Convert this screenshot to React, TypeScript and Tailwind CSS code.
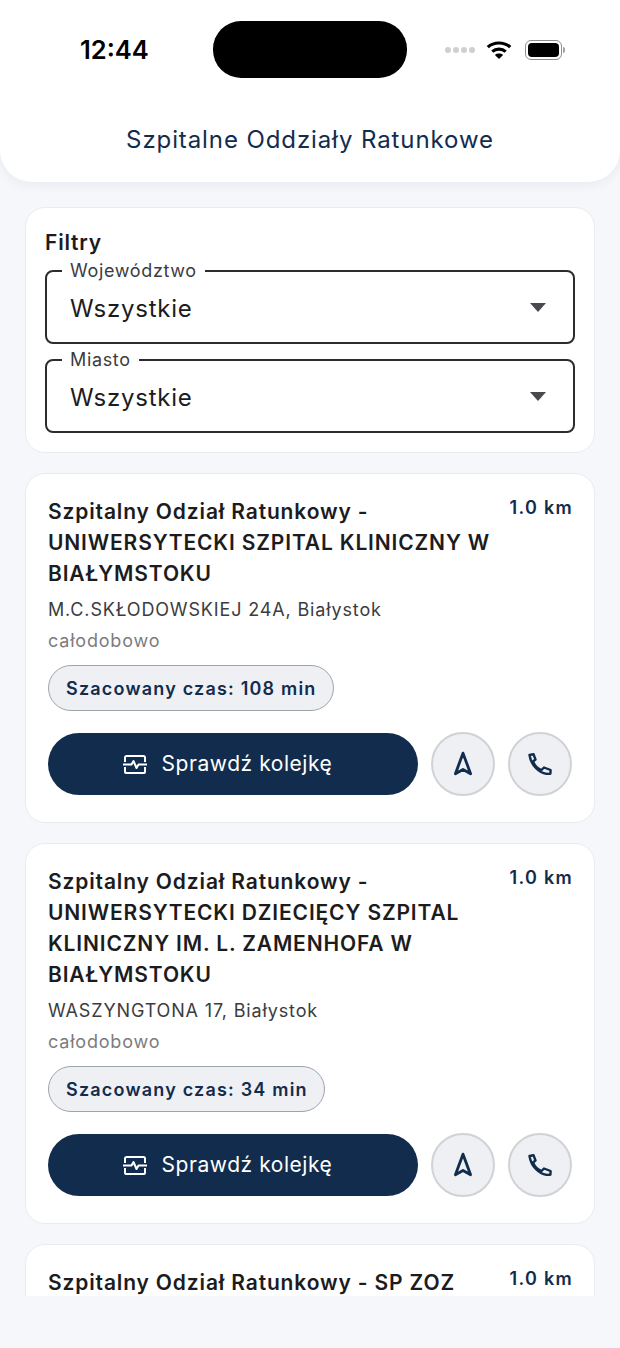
import { Navigation2 } from "lucide-react"

const hospitals = [
  {
    name: "Szpitalny Odział Ratunkowy - UNIWERSYTECKI SZPITAL KLINICZNY W BIAŁYMSTOKU",
    address: "M.C.SKŁODOWSKIEJ 24A, Białystok",
    time: 108,
  },
  {
    name: "Szpitalny Odział Ratunkowy - UNIWERSYTECKI DZIECIĘCY SZPITAL KLINICZNY IM. L. ZAMENHOFA W BIAŁYMSTOKU",
    address: "WASZYNGTONA 17, Białystok",
    time: 34,
  },
]

const WifiIcon = () => (
  <svg width="26" height="20" viewBox="0 0 26 20" fill="none">
    <path d="M1.8 7.2C7.8 1.6 18.2 1.6 24.2 7.2" stroke="black" strokeWidth="3.2" />
    <path d="M6.3 11.6C10 8.2 16 8.2 19.7 11.6" stroke="black" strokeWidth="3.2" />
    <path d="M13 19L8.9 14.9C11.2 13 14.8 13 17.1 14.9L13 19Z" fill="black" />
  </svg>
)

const BatteryIcon = () => (
  <div className="flex items-center gap-[1px]">
    <div className="h-[20px] w-[37px] rounded-[6px] border border-[#8e8e8e] p-[2px]">
      <div className="h-full w-full rounded-[4px] bg-black" />
    </div>
    <div className="h-[6px] w-[2px] rounded-r-full bg-[#a0a0a0]" />
  </div>
)

const PulseIcon = () => (
  <svg width="24" height="19" viewBox="0 0 24 19" fill="none" stroke="white" strokeWidth="2" strokeLinejoin="round">
    <path d="M2 7V2.6A1.6 1.6 0 0 1 3.6 1h16.8A1.6 1.6 0 0 1 22 2.6V7" />
    <path d="M2 12v4.4A1.6 1.6 0 0 0 3.6 18h16.8a1.6 1.6 0 0 0 1.6-1.6V12" />
    <path d="M0 9.5h8.5l2-3.5 3 7 2-3.5H24" />
  </svg>
)

const PhoneIcon = () => (
  <svg width="24" height="22" viewBox="0 0 24 22" fill="none" stroke="currentColor" strokeWidth="2.4" strokeLinejoin="round">
    <path d="M1.5 2 5.5 1.2 7.5 6.5 5 8.5C6.5 12.5 9.5 15.5 13.5 17L16 14.5 22.6 17 22.4 20.6 21 21C11 21 3 12 1.5 2Z" />
  </svg>
)

const StatusBar = () => (
  <div className="flex h-[100px] items-start">
    <span className="ml-[80px] mt-[35px] w-[133px] text-[25.5px] font-semibold leading-[30px] text-black">12:44</span>
    <div className="mt-[21px] h-[57px] w-[194px] rounded-[28px] bg-black" />
    <div className="ml-[38px] mt-[40px] flex items-center">
      <div className="flex gap-[2.5px]">
        <span className="h-[6px] w-[5.5px] rounded-full bg-[#cfcfcf]" />
        <span className="h-[6px] w-[5.5px] rounded-full bg-[#cfcfcf]" />
        <span className="h-[6px] w-[5.5px] rounded-full bg-[#cfcfcf]" />
        <span className="h-[6px] w-[5.5px] rounded-full bg-[#cfcfcf]" />
      </div>
      <div className="ml-[11px]">
        <WifiIcon />
      </div>
      <div className="ml-[13px]">
        <BatteryIcon />
      </div>
    </div>
  </div>
)

const FilterSelect = ({ label }: { label: string }) => (
  <div className="relative flex h-[74px] items-center justify-between rounded-[8px] border-2 border-[#2c2c2e] pl-[23px] pr-[27px]">
    <span className="absolute left-[15px] top-[-11px] bg-white px-[8px] text-[18px] leading-[20px] tracking-[0.65px] text-[#3c3c40]">
      {label}
    </span>
    <span className="pt-[3px] text-[24px] leading-[30px] tracking-[0.75px] text-[#1c1c1e]">Wszystkie</span>
    <svg width="16" height="9" viewBox="0 0 16 9">
      <path d="M0 0h16L8 9z" fill="#4a4a4e" />
    </svg>
  </div>
)

const HospitalCard = ({ name, address, time }: { name: string; address: string; time: number }) => (
  <div className="rounded-[20px] border border-[#e9ebef] bg-white px-[22px] pb-[26px] pt-[22px]">
    <div className="flex items-start justify-between gap-[12px]">
      <h2 className="text-[21px] font-semibold leading-[31px] tracking-[0.85px] text-[#1c1c1e]">{name}</h2>
      <span className="mr-[-1px] mt-[-1px] whitespace-nowrap text-[18px] font-semibold leading-[26px] tracking-[1.3px] text-[#122c4e]">
        1.0 km
      </span>
    </div>
    <p className="mt-[5px] text-[18px] leading-[31px] tracking-[0.85px] text-[#3c3c40]">{address}</p>
    <p className="text-[18px] leading-[31px] tracking-[0.8px] text-[#7c7c80]">całodobowo</p>
    <div className="mt-[9px] flex h-[46px] w-fit items-center rounded-full border border-[#9ea3ac] bg-[#eef0f4] pl-[17px] pr-[16px] text-[18px] font-semibold tracking-[1.2px] text-[#122c4e]">
      Szacowany czas: {time} min
    </div>
    <div className="mt-[21px] flex items-center gap-[13px]">
      <button className="flex h-[62px] w-[370px] items-center justify-center gap-[15px] rounded-full bg-[#122c4e] pr-[11px] text-[21px] tracking-[0.55px] text-white">
        <PulseIcon />
        Sprawdź kolejkę
      </button>
      <button className="flex h-[64px] w-[64px] items-center justify-center rounded-full border-2 border-[#d0d2d6] bg-[#eef0f4] text-[#122c4e]">
        <Navigation2 size={26} strokeWidth={2.6} />
      </button>
      <button className="flex h-[64px] w-[64px] items-center justify-center rounded-full border-2 border-[#d0d2d6] bg-[#eef0f4] text-[#122c4e]">
        <PhoneIcon />
      </button>
    </div>
  </div>
)

export default function App() {
  return (
    <div className="h-[1348px] w-[620px] overflow-hidden bg-[#f5f7fa] font-['Inter',sans-serif]">
      <header className="h-[182px] rounded-b-[32px] bg-white shadow-[0_3px_12px_rgba(20,40,80,0.06)]">
        <StatusBar />
        <h1 className="mt-[24px] text-center text-[24px] leading-[32px] tracking-[0.9px] text-[#122c4e]">
          Szpitalne Oddziały Ratunkowe
        </h1>
      </header>
      <main className="flex h-[1114px] flex-col gap-[20px] overflow-hidden px-[25px] pt-[25px]">
        <section className="rounded-[20px] border border-[#e9ebef] bg-white px-[19px] pb-[19px] pt-[21px]">
          <h2 className="text-[21px] font-semibold leading-[28px] tracking-[0.8px] text-[#1c1c1e]">Filtry</h2>
          <div className="mt-[13px] flex flex-col gap-[15px]">
            <FilterSelect label="Województwo" />
            <FilterSelect label="Miasto" />
          </div>
        </section>
        {hospitals.map((h) => (
          <HospitalCard key={h.address} {...h} />
        ))}
        <div className="h-[120px] shrink-0 rounded-t-[20px] border border-[#e9ebef] bg-white px-[22px] pt-[22px]">
          <div className="flex items-start justify-between gap-[12px]">
            <h2 className="text-[21px] font-semibold leading-[31px] tracking-[0.85px] text-[#1c1c1e]">
              Szpitalny Odział Ratunkowy - SP ZOZ
            </h2>
            <span className="mr-[-1px] mt-[-1px] whitespace-nowrap text-[18px] font-semibold leading-[26px] tracking-[1.3px] text-[#122c4e]">
              1.0 km
            </span>
          </div>
        </div>
      </main>
    </div>
  )
}
